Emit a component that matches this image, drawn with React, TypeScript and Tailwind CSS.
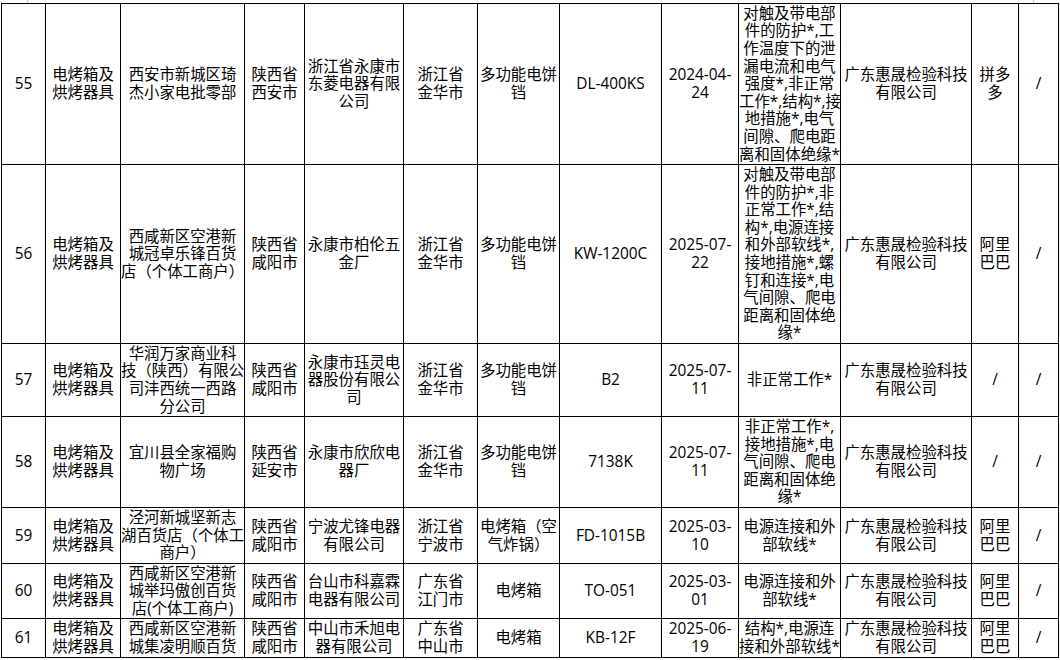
import React from "react";

type Row = { h: string; cells: string[][] };

const ORG = ["广东惠晟检验科技", "有限公司"];
const CAT = ["电烤箱及", "烘烤器具"];

const rows: Row[] = [
  {
    h: "h-[161px]",
    cells: [
      ["55"],
      CAT,
      ["西安市新城区琦", "杰小家电批零部"],
      ["陕西省", "西安市"],
      ["浙江省永康市", "东菱电器有限", "公司"],
      ["浙江省", "金华市"],
      ["多功能电饼", "铛"],
      ["DL-400KS"],
      ["2024-04-", "24"],
      ["对触及带电部", "件的防护*,工", "作温度下的泄", "漏电流和电气", "强度*,非正常", "工作*,结构*,接", "地措施*,电气", "间隙、爬电距", "离和固体绝缘*"],
      ORG,
      ["拼多", "多"],
      ["/"],
    ],
  },
  {
    h: "h-[179px]",
    cells: [
      ["56"],
      CAT,
      ["西咸新区空港新", "城冠卓乐锋百货", "店（个体工商户）"],
      ["陕西省", "咸阳市"],
      ["永康市柏伦五", "金厂"],
      ["浙江省", "金华市"],
      ["多功能电饼", "铛"],
      ["KW-1200C"],
      ["2025-07-", "22"],
      ["对触及带电部", "件的防护*,非", "正常工作*,结", "构*,电源连接", "和外部软线*,", "接地措施*,螺", "钉和连接*,电", "气间隙、爬电", "距离和固体绝", "缘*"],
      ORG,
      ["阿里", "巴巴"],
      ["/"],
    ],
  },
  {
    h: "h-[73px]",
    cells: [
      ["57"],
      CAT,
      ["华润万家商业科", "技（陕西）有限公", "司沣西统一西路", "分公司"],
      ["陕西省", "咸阳市"],
      ["永康市珏灵电", "器股份有限公", "司"],
      ["浙江省", "金华市"],
      ["多功能电饼", "铛"],
      ["B2"],
      ["2025-07-", "11"],
      ["非正常工作*"],
      ORG,
      ["/"],
      ["/"],
    ],
  },
  {
    h: "h-[91px]",
    cells: [
      ["58"],
      CAT,
      ["宜川县全家福购", "物广场"],
      ["陕西省", "延安市"],
      ["永康市欣欣电", "器厂"],
      ["浙江省", "金华市"],
      ["多功能电饼", "铛"],
      ["7138K"],
      ["2025-07-", "11"],
      ["非正常工作*,", "接地措施*,电", "气间隙、爬电", "距离和固体绝", "缘*"],
      ORG,
      ["/"],
      ["/"],
    ],
  },
  {
    h: "h-[56px]",
    cells: [
      ["59"],
      CAT,
      ["泾河新城坚新志", "湖百货店（个体工", "商户）"],
      ["陕西省", "咸阳市"],
      ["宁波尤锋电器", "有限公司"],
      ["浙江省", "宁波市"],
      ["电烤箱（空", "气炸锅）"],
      ["FD-1015B"],
      ["2025-03-", "10"],
      ["电源连接和外", "部软线*"],
      ORG,
      ["阿里", "巴巴"],
      ["/"],
    ],
  },
  {
    h: "h-[55px]",
    cells: [
      ["60"],
      CAT,
      ["西咸新区空港新", "城举玛傲创百货", "店(个体工商户)"],
      ["陕西省", "咸阳市"],
      ["台山市科嘉霖", "电器有限公司"],
      ["广东省", "江门市"],
      ["电烤箱"],
      ["TO-051"],
      ["2025-03-", "01"],
      ["电源连接和外", "部软线*"],
      ORG,
      ["阿里", "巴巴"],
      ["/"],
    ],
  },
  {
    h: "h-[39px]",
    cells: [
      ["61"],
      CAT,
      ["西咸新区空港新", "城集凌明顺百货"],
      ["陕西省", "咸阳市"],
      ["中山市禾旭电", "器有限公司"],
      ["广东省", "中山市"],
      ["电烤箱"],
      ["KB-12F"],
      ["2025-06-", "19"],
      ["结构*,电源连", "接和外部软线*"],
      ORG,
      ["阿里", "巴巴"],
      ["/"],
    ],
  },
];

const colW = [
  "w-[44px]",
  "w-[75px]",
  "w-[124px]",
  "w-[60px]",
  "w-[99px]",
  "w-[74px]",
  "w-[82px]",
  "w-[102px]",
  "w-[77px]",
  "w-[102px]",
  "w-[131px]",
  "w-[47px]",
  "w-[40px]",
];

export default function App() {
  return (
    <div
      className="w-[1060px] h-[660px] overflow-hidden bg-white text-black"
      style={{ fontFamily: '"Open Sans", "Noto Sans CJK SC", sans-serif' }}
    >
      <div className="flex h-[3px]">
        <div className="ml-[27px] w-px h-[3px] bg-[#d0d0d0]" />
        <div className="ml-[1005px] w-px h-[3px] bg-[#d0d0d0]" />
      </div>
      <div className="pl-[1px]">
        <table className="table-fixed border-collapse w-[1058px] text-[15.4px] leading-[17.6px]">
          <colgroup>
            {colW.map((w, i) => (
              <col key={i} className={w} />
            ))}
          </colgroup>
          <tbody>
            {rows.map((r, ri) => (
              <tr key={ri} className={r.h}>
                {r.cells.map((lines, ci) => (
                  <td
                    key={ci}
                    className="border border-black text-center align-middle p-0 whitespace-nowrap overflow-hidden"
                  >
                    {lines.map((l, li) => (
                      <div key={li}>{l}</div>
                    ))}
                  </td>
                ))}
              </tr>
            ))}
          </tbody>
        </table>
      </div>
    </div>
  );
}
